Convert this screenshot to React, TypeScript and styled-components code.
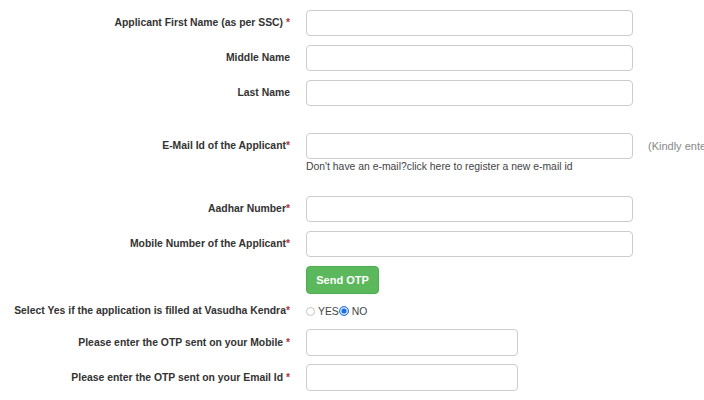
import React, { useState } from "react";
import styled, { createGlobalStyle } from "styled-components";

const GlobalStyle = createGlobalStyle`
  body {
    margin: 0;
    background: #ffffff;
    font-family: "Liberation Sans", Arial, sans-serif;
    color: #333333;
  }
`;

const Form = styled.form`
  padding-top: 10px;
  width: 704px;
  overflow: hidden;
`;

const Row = styled.div<{ $gap?: number }>`
  display: grid;
  grid-template-columns: 290px 1fr;
  column-gap: 16px;
  align-items: start;
  margin-bottom: ${(p) => (p.$gap === undefined ? 9 : p.$gap)}px;
`;

const Label = styled.label<{ $h?: number }>`
  display: block;
  text-align: right;
  font-size: 10.4px;
  font-weight: bold;
  color: #333333;
  height: ${(p) => p.$h || 26}px;
  line-height: ${(p) => p.$h || 26}px;
  white-space: nowrap;
`;

const Star = styled.span`
  color: #b0343c;
`;

const Field = styled.div`
  display: flex;
  flex-direction: column;
  align-items: flex-start;
`;

const FieldLine = styled.div`
  display: flex;
  align-items: center;
  white-space: nowrap;
`;

const TextInput = styled.input<{ $w?: number; $h?: number }>`
  box-sizing: border-box;
  width: ${(p) => p.$w || 327}px;
  height: ${(p) => p.$h || 26}px;
  border: 1px solid #cccccc;
  border-radius: 4px;
  padding: 4px 8px;
  font-size: 12px;
  font-family: inherit;
  outline: none;
`;

const Note = styled.span`
  margin-left: 15px;
  font-size: 11px;
  color: #888888;
`;

const Hint = styled.div`
  font-size: 10.4px;
  line-height: 12px;
  color: #444444;
  margin-top: 2px;
  white-space: nowrap;
`;

const SendButton = styled.button`
  width: 73px;
  height: 28px;
  border: 1px solid #4cae4c;
  border-radius: 4px;
  background: #5cb85c;
  color: #ffffff;
  font-family: inherit;
  font-size: 11px;
  font-weight: bold;
  cursor: pointer;
  padding: 0;
`;

const RadioGroup = styled.div`
  display: flex;
  align-items: center;
  height: 12px;
  font-size: 10.4px;
  color: #444444;
`;

const Radio = styled.input`
  appearance: none;
  box-sizing: border-box;
  width: 9px;
  height: 9px;
  margin: 0 3px 0 0;
  border: 1px solid #c4c4c4;
  border-radius: 50%;
  background: #ffffff;

  &:checked {
    width: 10px;
    height: 10px;
    border: 1px solid #2f7de1;
    background: #1e6fe0;
    box-shadow: inset 0 0 0 1.5px #cfe0f7;
  }
`;

const Spacer = styled.div<{ $h: number }>`
  height: ${(p) => p.$h}px;
`;

const App = () => {
  const [kendra, setKendra] = useState("no");

  return (
    <>
      <GlobalStyle />
      <Form onSubmit={(e) => e.preventDefault()}>
        <Row>
          <Label>
            Applicant First Name (as per SSC) <Star>*</Star>
          </Label>
          <Field>
            <TextInput type="text" />
          </Field>
        </Row>
        <Row>
          <Label>Middle Name</Label>
          <Field>
            <TextInput type="text" />
          </Field>
        </Row>
        <Row $gap={27}>
          <Label>Last Name</Label>
          <Field>
            <TextInput type="text" />
          </Field>
        </Row>
        <Row $gap={23}>
          <Label>
            E-Mail Id of the Applicant<Star>*</Star>
          </Label>
          <Field>
            <FieldLine>
              <TextInput type="email" />
              <Note>(Kindly enter a valid e-mail id)</Note>
            </FieldLine>
            <Hint>Don't have an e-mail?click here to register a new e-mail id</Hint>
          </Field>
        </Row>
        <Row>
          <Label>
            Aadhar Number<Star>*</Star>
          </Label>
          <Field>
            <TextInput type="text" />
          </Field>
        </Row>
        <Row>
          <Label>
            Mobile Number of the Applicant<Star>*</Star>
          </Label>
          <Field>
            <TextInput type="text" />
          </Field>
        </Row>
        <Row $gap={11}>
          <Spacer $h={28} />
          <Field>
            <SendButton type="button">Send OTP</SendButton>
          </Field>
        </Row>
        <Row $gap={12}>
          <Label $h={12}>
            Select Yes if the application is filled at Vasudha Kendra<Star>*</Star>
          </Label>
          <RadioGroup>
            <Radio
              type="radio"
              name="kendra"
              checked={kendra === "yes"}
              onChange={() => setKendra("yes")}
            />
            YES
            <Radio
              type="radio"
              name="kendra"
              checked={kendra === "no"}
              onChange={() => setKendra("no")}
            />
            NO
          </RadioGroup>
        </Row>
        <Row $gap={8}>
          <Label $h={27}>
            Please enter the OTP sent on your Mobile <Star>*</Star>
          </Label>
          <Field>
            <TextInput type="text" $w={212} $h={27} />
          </Field>
        </Row>
        <Row>
          <Label $h={27}>
            Please enter the OTP sent on your Email Id <Star>*</Star>
          </Label>
          <Field>
            <TextInput type="text" $w={212} $h={27} />
          </Field>
        </Row>
      </Form>
    </>
  );
};

export default App;
